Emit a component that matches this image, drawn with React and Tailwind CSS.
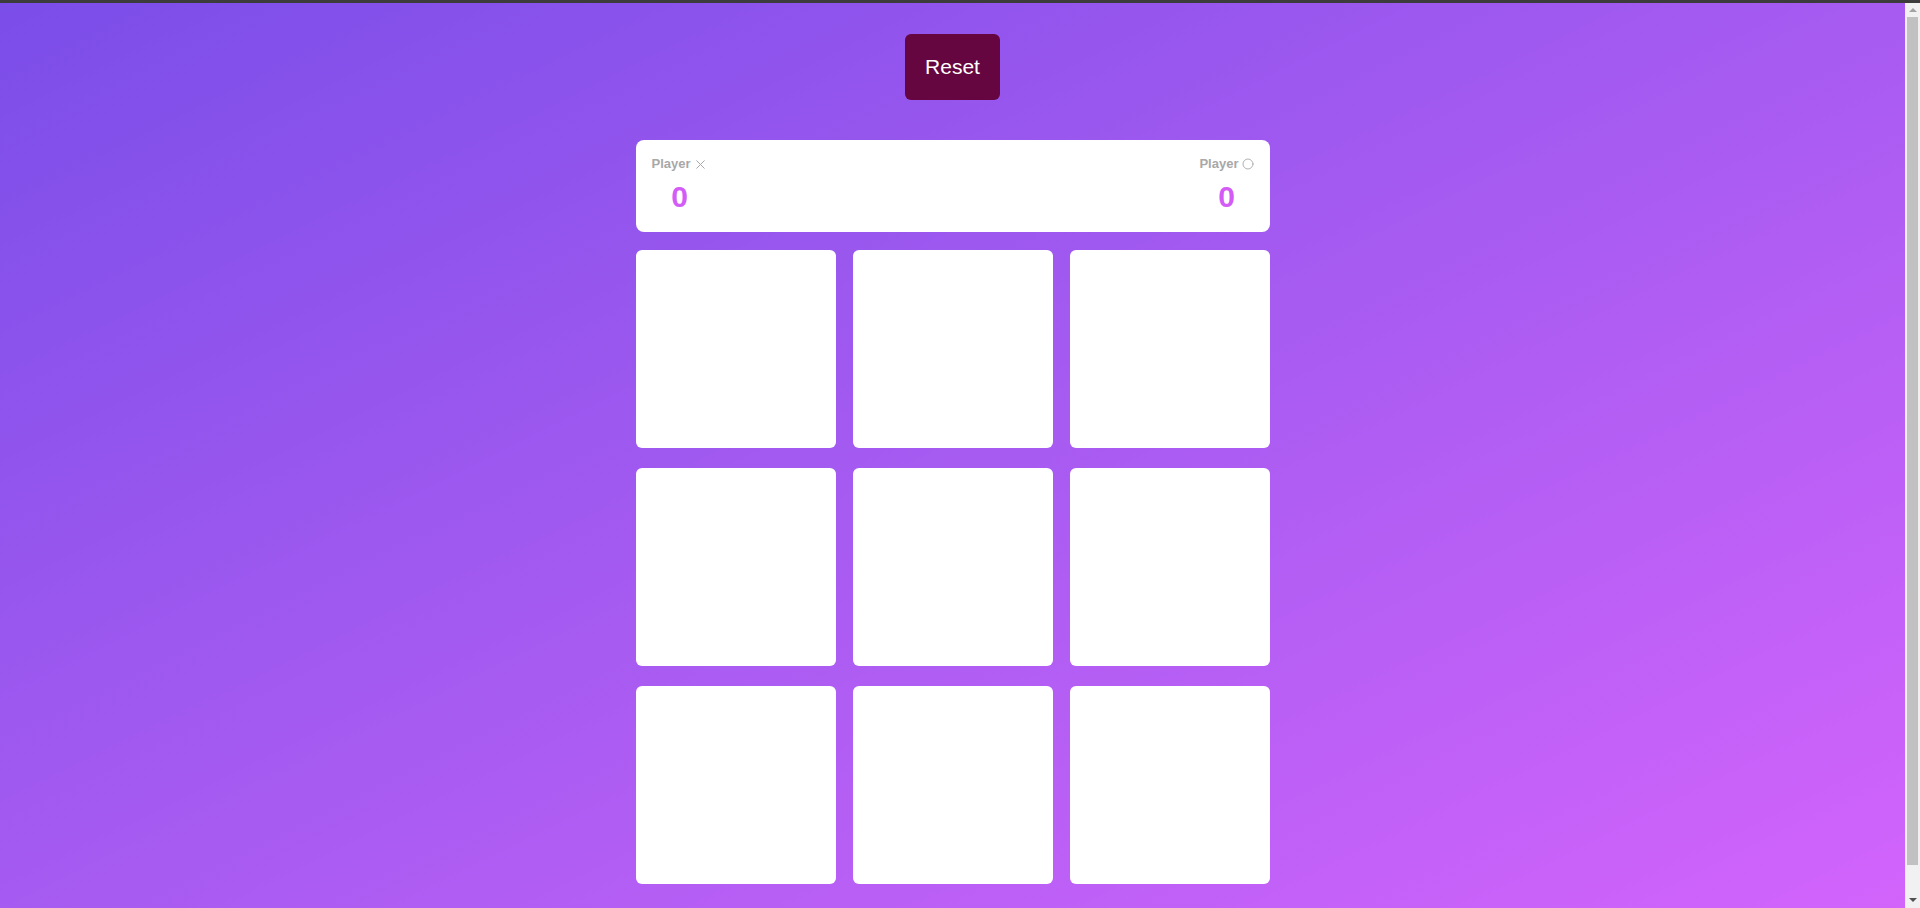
import React, { useState } from 'react';
import { X, Circle } from 'lucide-react';

const ScoreBoard = ({ scores }) => (
  <div className="w-[634px] bg-white rounded-lg px-4 pt-4 pb-[18px] flex justify-between">
    <div className="flex flex-col items-center">
      <div className="flex items-center gap-[2px] text-[13px] leading-4 font-bold text-[#a8a8a8]">
        Player <X size={15} strokeWidth={1.6} />
      </div>
      <div className="mt-2 text-[30px] leading-[34px] font-bold text-[#d35cf7]">{scores.x}</div>
    </div>
    <div className="flex flex-col items-center">
      <div className="flex items-center gap-[3px] text-[13px] leading-4 font-bold text-[#a8a8a8]">
        Player <Circle size={12} strokeWidth={1.8} />
      </div>
      <div className="mt-2 text-[30px] leading-[34px] font-bold text-[#d35cf7]">{scores.o}</div>
    </div>
  </div>
);

const Board = ({ cells, onPlay }) => (
  <div className="mt-[18px] w-[634px] grid grid-cols-3 gap-x-[17px] gap-y-5">
    {cells.map((cell, i) => (
      <button
        key={i}
        onClick={() => onPlay(i)}
        className="h-[198px] bg-white rounded-md flex items-center justify-center text-7xl font-bold text-[#d35cf7]"
      >
        {cell}
      </button>
    ))}
  </div>
);

const Scrollbar = () => (
  <div className="fixed top-0 right-0 bottom-0 w-[15px] bg-[#f1f1f1] z-40 flex flex-col items-center">
    <div className="h-[17px] flex items-center justify-center pt-[3px]">
      <div className="w-0 h-0 border-l-[4px] border-r-[4px] border-b-[4px] border-l-transparent border-r-transparent border-b-[#a3a3a3]" />
    </div>
    <div className="w-[11px] h-[848px] bg-[#c1c1c1]" />
    <div className="flex-1" />
    <div className="h-[17px] flex items-center justify-center">
      <div className="w-0 h-0 border-l-[4px] border-r-[4px] border-t-[4px] border-l-transparent border-r-transparent border-t-[#505050]" />
    </div>
  </div>
);

export default function App() {
  const [cells, setCells] = useState(Array(9).fill(null));
  const [scores, setScores] = useState({ x: 0, o: 0 });

  const play = (i) => {
    if (cells[i]) return;
    const turn = cells.filter(Boolean).length % 2 === 0 ? 'X' : 'O';
    const next = [...cells];
    next[i] = turn;
    setCells(next);
  };

  const reset = () => {
    setCells(Array(9).fill(null));
    setScores({ x: 0, o: 0 });
  };

  return (
    <div className="min-h-screen bg-linear-to-br from-[#7b4de9] via-[#a75bf1] to-[#d464fc] font-['Liberation_Sans',Arial,sans-serif]">
      <div className="fixed top-0 left-0 right-0 h-[3px] bg-[#3c3c3c] z-50" />
      <Scrollbar />
      <div className="mr-[15px] flex flex-col items-center pt-[34px] pb-[57px]">
        <button
          onClick={reset}
          className="h-[66px] px-5 rounded-md bg-[#660640] text-white text-[21px]"
        >
          Reset
        </button>
        <div className="mt-[40px]">
          <ScoreBoard scores={scores} />
        </div>
        <Board cells={cells} onPlay={play} />
      </div>
    </div>
  );
}
